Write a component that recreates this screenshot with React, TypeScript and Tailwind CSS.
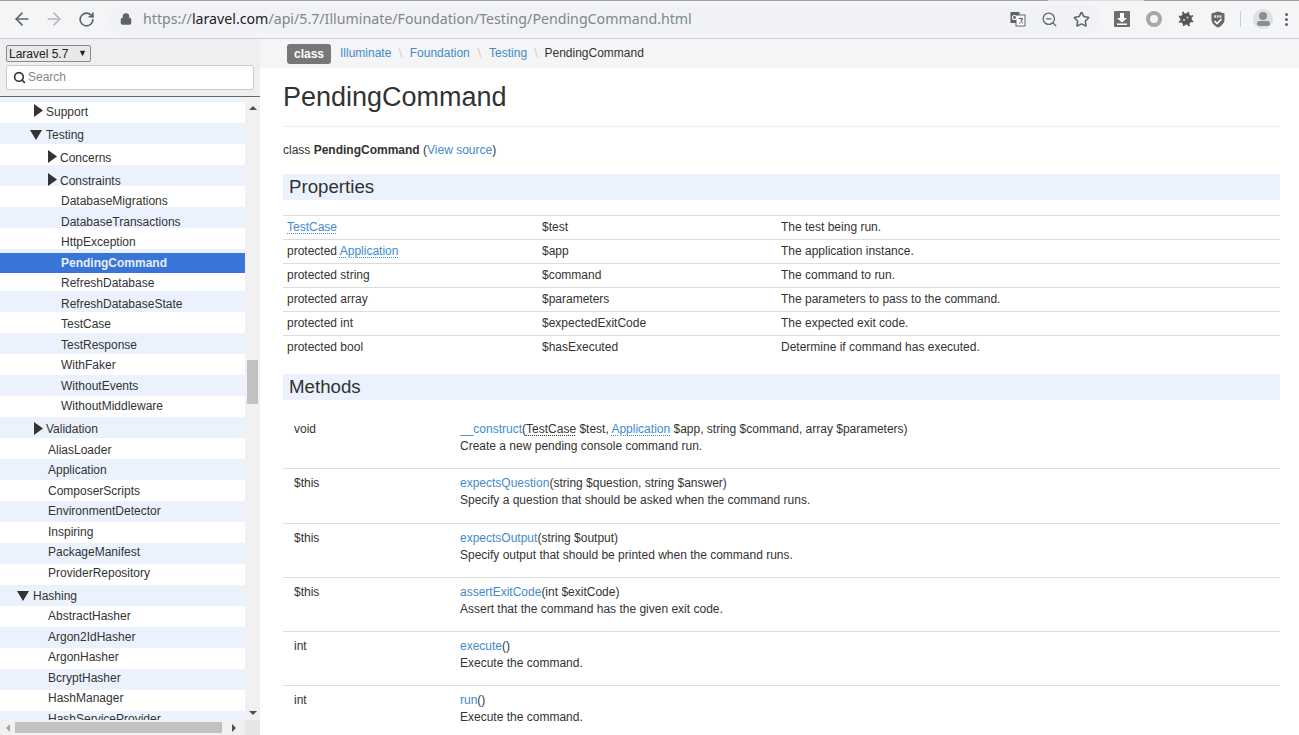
import React from 'react';
import { ArrowLeft, ArrowRight, RotateCw, Lock, Search, Star, ZoomOut } from 'lucide-react';

type TreeItem = { label: string; pad: string; arrow?: 'right' | 'down'; active?: boolean };

const tree: TreeItem[] = [
  { label: 'Support', pad: 'pl-[34px]', arrow: 'right' },
  { label: 'Testing', pad: 'pl-[30px]', arrow: 'down' },
  { label: 'Concerns', pad: 'pl-[48px]', arrow: 'right' },
  { label: 'Constraints', pad: 'pl-[48px]', arrow: 'right' },
  { label: 'DatabaseMigrations', pad: 'pl-[61px]' },
  { label: 'DatabaseTransactions', pad: 'pl-[61px]' },
  { label: 'HttpException', pad: 'pl-[61px]' },
  { label: 'PendingCommand', pad: 'pl-[61px]', active: true },
  { label: 'RefreshDatabase', pad: 'pl-[61px]' },
  { label: 'RefreshDatabaseState', pad: 'pl-[61px]' },
  { label: 'TestCase', pad: 'pl-[61px]' },
  { label: 'TestResponse', pad: 'pl-[61px]' },
  { label: 'WithFaker', pad: 'pl-[61px]' },
  { label: 'WithoutEvents', pad: 'pl-[61px]' },
  { label: 'WithoutMiddleware', pad: 'pl-[61px]' },
  { label: 'Validation', pad: 'pl-[34px]', arrow: 'right' },
  { label: 'AliasLoader', pad: 'pl-[48px]' },
  { label: 'Application', pad: 'pl-[48px]' },
  { label: 'ComposerScripts', pad: 'pl-[48px]' },
  { label: 'EnvironmentDetector', pad: 'pl-[48px]' },
  { label: 'Inspiring', pad: 'pl-[48px]' },
  { label: 'PackageManifest', pad: 'pl-[48px]' },
  { label: 'ProviderRepository', pad: 'pl-[48px]' },
  { label: 'Hashing', pad: 'pl-[17px]', arrow: 'down' },
  { label: 'AbstractHasher', pad: 'pl-[48px]' },
  { label: 'Argon2IdHasher', pad: 'pl-[48px]' },
  { label: 'ArgonHasher', pad: 'pl-[48px]' },
  { label: 'BcryptHasher', pad: 'pl-[48px]' },
  { label: 'HashManager', pad: 'pl-[48px]' },
  { label: 'HashServiceProvider', pad: 'pl-[48px]' },
];

const Abbr = ({ children }: { children: React.ReactNode }) => (
  <span className="text-[#428bca] underline decoration-dotted decoration-[#428bca] underline-offset-2">{children}</span>
);

const properties: { type: React.ReactNode; name: string; desc: string }[] = [
  { type: <Abbr>TestCase</Abbr>, name: '$test', desc: 'The test being run.' },
  { type: <>protected <Abbr>Application</Abbr></>, name: '$app', desc: 'The application instance.' },
  { type: 'protected string', name: '$command', desc: 'The command to run.' },
  { type: 'protected array', name: '$parameters', desc: 'The parameters to pass to the command.' },
  { type: 'protected int', name: '$expectedExitCode', desc: 'The expected exit code.' },
  { type: 'protected bool', name: '$hasExecuted', desc: 'Determine if command has executed.' },
];

const methods: { ret: string; name: string; args: React.ReactNode; desc: string }[] = [
  {
    ret: 'void',
    name: '__construct',
    args: (
      <>
        (<span className="underline decoration-dotted underline-offset-2">TestCase</span> $test, <Abbr>Application</Abbr> $app, string $command, array $parameters)
      </>
    ),
    desc: 'Create a new pending console command run.',
  },
  { ret: '$this', name: 'expectsQuestion', args: '(string $question, string $answer)', desc: 'Specify a question that should be asked when the command runs.' },
  { ret: '$this', name: 'expectsOutput', args: '(string $output)', desc: 'Specify output that should be printed when the command runs.' },
  { ret: '$this', name: 'assertExitCode', args: '(int $exitCode)', desc: 'Assert that the command has the given exit code.' },
  { ret: 'int', name: 'execute', args: '()', desc: 'Execute the command.' },
  { ret: 'int', name: 'run', args: '()', desc: 'Execute the command.' },
];

const Toolbar = () => (
  <div className="h-[39px] shrink-0 bg-[#f4f5f7] border-b border-[#c8cde2] relative flex items-center">
    <div className="absolute top-0 left-0 right-0 h-px flex">
      <div className="w-[1048px] bg-[#9e9e9e]" />
      <div className="w-[96px] bg-[#dcdcdc]" />
      <div className="flex-1 bg-[#9e9e9e]" />
    </div>
    <div className="w-[44px] flex justify-center">
      <ArrowLeft size={20} strokeWidth={2} className="text-[#5f6368]" />
    </div>
    <div className="w-[20px] flex justify-center">
      <ArrowRight size={20} strokeWidth={2} className="text-[#b4b7bb]" />
    </div>
    <div className="w-[44px] flex justify-center">
      <RotateCw size={17} strokeWidth={2.4} className="text-[#5f6368]" />
    </div>
    <div className="ml-[1px] w-[991px] h-[29px] rounded-full bg-[#f0f2f5] flex items-center pl-[11px] pr-[10px]">
      <Lock size={12} strokeWidth={3} className="text-[#5f6368] fill-[#5f6368] mr-[11px]" />
      <span className="text-[14.2px] text-[#80868b] font-['Noto_Sans',sans-serif] whitespace-nowrap">
        https://<span className="text-[#202124]">laravel.com</span>/api/5.7/Illuminate/Foundation/Testing/PendingCommand.html
      </span>
      <div className="ml-auto flex items-center gap-[15px]">
        <svg width="16" height="16" viewBox="0 0 16 16">
          <rect x="0.5" y="1" width="9" height="11" fill="#5f6368" />
          <rect x="6" y="4" width="9" height="11" fill="#fff" stroke="#5f6368" />
          <circle cx="4.5" cy="6.5" r="2" fill="none" stroke="#fff" strokeWidth="1.1" />
          <path d="M8.5 7.5h4.5M10.5 6.5l2 6M12.5 8c-.5 2-1.800 3.500-3.500 4.500" fill="none" stroke="#5f6368" strokeWidth="0.9" />
        </svg>
        <ZoomOut size={17} strokeWidth={1.8} className="text-[#5f6368]" />
        <Star size={17} strokeWidth={2.2} className="text-[#5f6368]" />
      </div>
    </div>
    <div className="ml-[14px] flex items-center">
      <svg width="16" height="16" viewBox="0 0 16 16">
        <rect width="16" height="16" rx="1" fill="#6e6e6e" />
        <path d="M6 2h4v5h3l-5 4.500L3 7h3z" fill="#fff" />
        <rect x="3" y="12.500" width="10" height="1.500" fill="#fff" />
      </svg>
      <div className="ml-[16px] w-[16px] h-[16px] rounded-full border-[4px] border-[#a8a8a8]" />
      <svg className="ml-[16px]" width="16" height="16" viewBox="0 0 16 16">
        <g transform="rotate(20 8 8)">
          <circle cx="8" cy="8" r="5.800" fill="#555" />
          <path d="M8 0.500v15M0.500 8h15M2.500 2.500l11 11M13.500 2.500l-11 11" stroke="#555" strokeWidth="1.800" />
        </g>
        <circle cx="6" cy="9" r="1" fill="#ddd" />
        <circle cx="9.500" cy="6.500" r="1" fill="#ddd" />
      </svg>
      <svg className="ml-[16px]" width="16" height="17" viewBox="0 0 16 17">
        <path d="M8 0.500l6.500 2v6c0 3.800-3 6.500-6.500 8-3.500-1.500-6.500-4.200-6.500-8v-6z" fill="#666" />
        <path d="M4 5.500h8" stroke="#ddd" strokeWidth="2.400" strokeDasharray="2 0.700" />
        <path d="M4.500 10l2.500 2.500 4.500-4.500" fill="none" stroke="#fff" strokeWidth="1.600" />
      </svg>
      <div className="ml-[14px] w-px h-[16px] bg-[#c8cde2]" />
      <div className="ml-[12px] w-[20px] h-[20px] rounded-full bg-[#dfe0e2] flex flex-col items-center justify-center overflow-hidden">
        <div className="w-[8px] h-[8px] rounded-full bg-[#8a8d91]" />
        <div className="mt-[1px] w-[13px] h-[5px] rounded-full bg-[#8a8d91]" />
      </div>
      <div className="ml-[12px] flex flex-col gap-[2px]">
        <div className="w-[3px] h-[3px] rounded-full bg-[#5f6368]" />
        <div className="w-[3px] h-[3px] rounded-full bg-[#5f6368]" />
        <div className="w-[3px] h-[3px] rounded-full bg-[#5f6368]" />
      </div>
    </div>
  </div>
);

const TreeRow = ({ item }: { item: TreeItem }) => {
  if (item.active) {
    return (
      <div className={`h-[20.5px] flex items-center bg-[#3875d7] text-[#e6eefa] font-bold ${item.pad}`}>{item.label}</div>
    );
  }
  if (!item.arrow) {
    return <div className={`h-[20.5px] flex items-center ${item.pad}`}>{item.label}</div>;
  }
  return (
    <div className={`h-[23px] pt-[2px] flex items-center ${item.pad}`}>
      {item.arrow === 'right' ? (
        <svg width="9" height="13" viewBox="0 0 9 13" className="mr-[3px] -mt-[2px]">
          <path d="M0 0l9 6.500L0 13z" fill="#333" />
        </svg>
      ) : (
        <svg width="12" height="10" viewBox="0 0 12 10" className="mr-[4px]">
          <path d="M0 0h12L6 10z" fill="#333" />
        </svg>
      )}
      {item.label}
    </div>
  );
};

const Sidebar = () => (
  <div className="w-[260px] shrink-0 flex flex-col bg-[#efefef]">
    <div className="h-[58px] shrink-0 border-b border-[#666] pt-[6px] px-[6px]">
      <div className="w-[85px] h-[17px] border border-[#8a8a8a] rounded-[2px] bg-[#e9e9e9] flex items-center justify-between pl-[2px] pr-[3px] text-[12px] text-[#222]">
        <span>Laravel 5.7</span>
        <span className="text-[9px]">▼</span>
      </div>
      <div className="mt-[3px] h-[25px] w-[248px] border border-[#ccc] rounded-[3px] bg-white flex items-center pl-[6px] pb-[1px] text-[12px] text-[#888]">
        <Search size={13} strokeWidth={3} className="text-[#333] mr-[2px]" />
        Search
      </div>
    </div>
    <div className="flex-1 min-h-0 flex">
      <div className="w-[245px] overflow-hidden pt-[2px] text-[12px] text-[#333] bg-[linear-gradient(#ffffff_50%,#ebf2fd_50%)] bg-[length:100%_42px] bg-[position:0_5px]">
        {tree.map((item) => (
          <TreeRow key={item.label} item={item} />
        ))}
      </div>
      <div className="w-[15px] bg-[#f1f1f1] flex flex-col items-center pt-[9px] pb-[5px] text-[#505050]">
        <div className="w-0 h-0 border-x-[4px] border-x-transparent border-b-[4px] border-b-[#505050]" />
        <div className="mt-[250px] w-[11px] h-[44px] bg-[#c1c1c1]" />
        <div className="mt-auto w-0 h-0 border-x-[4px] border-x-transparent border-t-[4px] border-t-[#505050]" />
      </div>
    </div>
    <div className="h-[15px] shrink-0 flex items-center bg-[#f1f1f1]">
      <div className="w-[15px] flex justify-center">
        <div className="w-0 h-0 border-y-[4px] border-y-transparent border-r-[4px] border-r-[#a3a3a3]" />
      </div>
      <div className="w-[207px] h-[11px] bg-[#c1c1c1]" />
      <div className="w-[23px] flex justify-center">
        <div className="w-0 h-0 border-y-[4px] border-y-transparent border-l-[4px] border-l-[#505050]" />
      </div>
      <div className="w-[15px] h-[15px] bg-[#e6e6e6]" />
    </div>
  </div>
);

const SectionTitle = ({ children }: { children: React.ReactNode }) => (
  <h2 className="h-[26px] bg-[#ebf2fd] pl-[6px] flex items-center text-[18.7px] text-[#333]">{children}</h2>
);

const Content = () => (
  <div className="flex-1 min-w-0 bg-white overflow-hidden text-[12px] text-[#333]">
    <div className="h-[29px] bg-[#f5f5f5] pl-[27px] flex items-center">
      <span className="w-[44px] h-[20px] rounded-[3px] bg-[#777] text-white font-bold flex items-center justify-center">class</span>
      <div className="flex items-center pb-[2px]">
        <span className="ml-[9px] text-[#428bca]">Illuminate</span>
        <span className="mx-[7.5px] text-[#ccc]">\</span>
        <span className="text-[#428bca]">Foundation</span>
        <span className="mx-[8px] text-[#ccc]">\</span>
        <span className="text-[#428bca]">Testing</span>
        <span className="mx-[7px] text-[#ccc]">\</span>
        <span>PendingCommand</span>
      </div>
    </div>
    <div className="pl-[23px] pr-[19px]">
      <h1 className="h-[59px] border-b border-[#eeeeee] flex items-center text-[27px] text-[#333]">PendingCommand</h1>
      <p className="mt-[16px] h-[15px] leading-[15px]">
        class <b>PendingCommand</b> (<span className="text-[#428bca]">View source</span>)
      </p>
      <div className="mt-[16px]">
        <SectionTitle>Properties</SectionTitle>
      </div>
      <div className="mt-[15px]">
        {properties.map((p) => (
          <div key={p.name} className="h-[24px] pb-[1px] border-t border-[#dddddd] flex items-center">
            <div className="w-[259px] pl-[4px]">{p.type}</div>
            <div className="w-[239px]">{p.name}</div>
            <div>{p.desc}</div>
          </div>
        ))}
      </div>
      <div className="mt-[15px]">
        <SectionTitle>Methods</SectionTitle>
      </div>
      <div className="mt-[14.2px]">
        {methods.map((m, idx) => (
          <div key={m.name} className={`h-[54.2px] flex leading-[17px] ${idx > 0 ? 'pt-[6px] border-t border-[#dddddd]' : 'pt-[7px]'}`}>
            <div className="w-[177px] pl-[11px]">{m.ret}</div>
            <div>
              <div>
                <span className="text-[#428bca]">{m.name}</span>
                {m.args}
              </div>
              <div>{m.desc}</div>
            </div>
          </div>
        ))}
      </div>
    </div>
  </div>
);

export default function App() {
  return (
    <div className="h-screen flex flex-col overflow-hidden font-['Liberation_Sans',Arial,sans-serif]">
      <Toolbar />
      <div className="flex-1 min-h-0 flex">
        <Sidebar />
        <Content />
      </div>
    </div>
  );
}
